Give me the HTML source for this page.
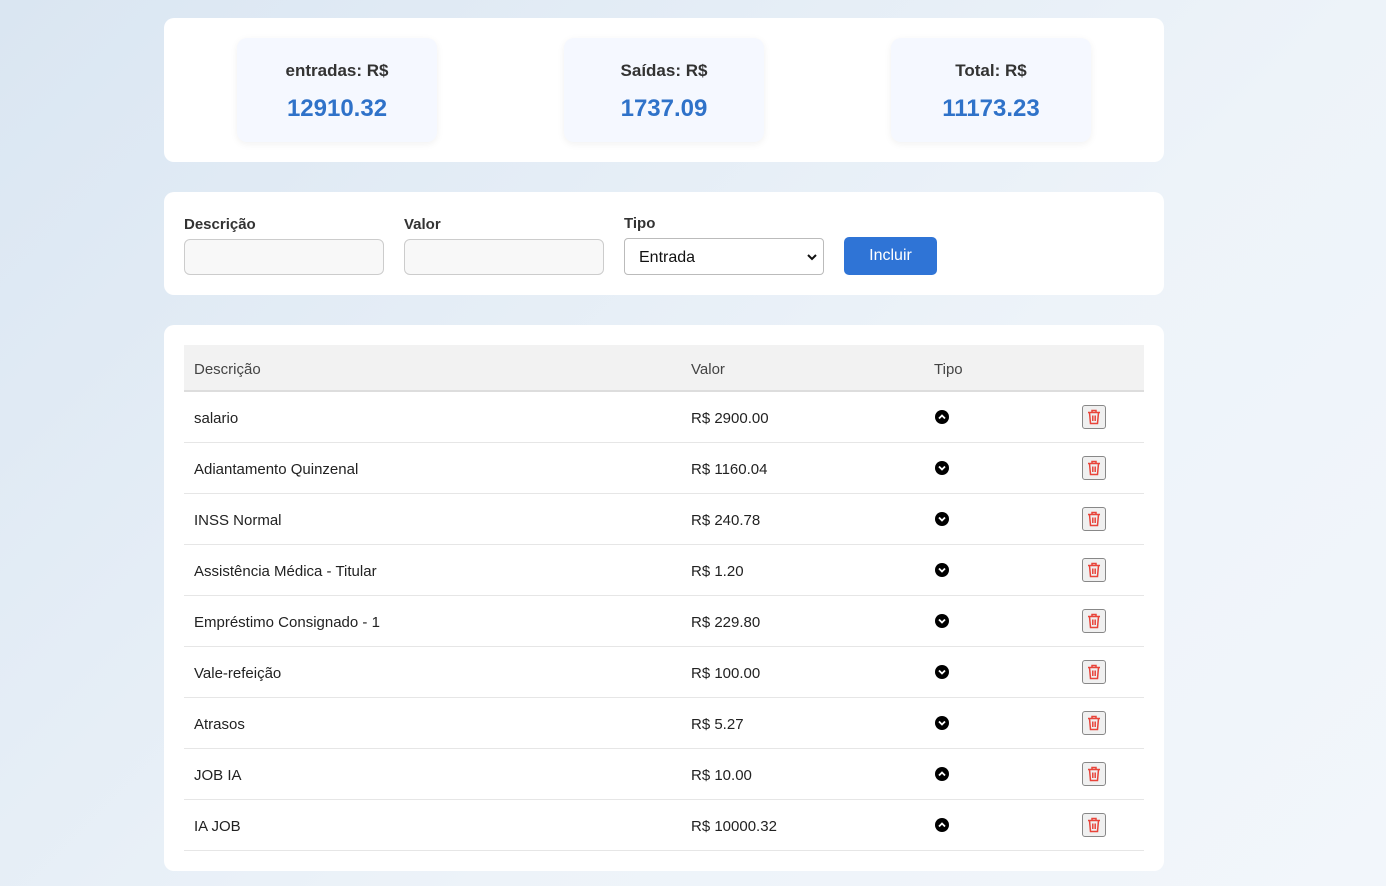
<!DOCTYPE html>
<html><head><meta charset="utf-8"><style>
*{box-sizing:border-box;margin:0;padding:0}
body{width:1386px;height:886px;overflow:hidden;background:linear-gradient(135deg,#dae6f2,#edf3f9 60%,#f2f6fb);font-family:"Liberation Sans",sans-serif;color:#222;position:relative}
.card{position:absolute;left:164px;width:1000px;background:#fff;border-radius:10px}
.sum{position:absolute;top:20px;width:200px;height:104px;background:#f5f8ff;border-radius:10px;box-shadow:0 2px 8px rgba(0,0,0,.06);text-align:center}
.sum .t{margin-top:23px;font-weight:bold;font-size:17px;color:#333}
.sum .v{margin-top:14px;font-weight:bold;font-size:24px;color:#2f72c9}
.lbl{position:absolute;top:24px;font-weight:bold;font-size:15px;color:#333}
.inp{position:absolute;top:47px;width:200px;height:36px;border:1px solid #ccc;border-radius:6px;background:#f8f8f8}
.sel{position:absolute;left:460px;top:46px;width:200px;height:37px;border:1px solid #bbb;border-radius:4px;background:#fff;font-size:16px;padding:10px 14px 0;color:#111}
.btn{position:absolute;left:680px;top:45px;width:93px;height:38px;background:#2f74d6;border-radius:5px;color:#fff;font-size:16px;text-align:center;line-height:38px}
table{position:absolute;left:20px;top:20px;width:960px;border-collapse:collapse;font-size:15px}
th{background:#f2f2f2;height:46px;text-align:left;font-weight:normal;color:#444;border-bottom:2px solid #ddd;padding:4px 0 0 10px}
td{height:51px;border-bottom:1px solid #e6e6e6;padding:4px 0 0 10px;color:#222}
td.x{padding:0 0 0 12px}
.tr{display:inline-block;width:24px;height:24px;border:1px solid #888;border-radius:3px;background:#f0f0f0;vertical-align:middle;padding:3px 0 0 4px}
</style></head><body>
<div class="card" style="top:18px;height:144px">
<div class="sum" style="left:73px"><div class="t">entradas: R$</div><div class="v">12910.32</div></div>
<div class="sum" style="left:400px"><div class="t">Saídas: R$</div><div class="v">1737.09</div></div>
<div class="sum" style="left:727px"><div class="t">Total: R$</div><div class="v">11173.23</div></div>
</div>
<div class="card" style="top:192px;height:103px">
<div class="lbl" style="left:20px">Descrição</div><div class="inp" style="left:20px"></div>
<div class="lbl" style="left:240px">Valor</div><div class="inp" style="left:240px"></div>
<div class="lbl" style="left:460px;top:23px">Tipo</div>
<div class="sel">Entrada<svg style="position:absolute;right:6px;top:15px" width="10" height="7" viewBox="0 0 10 7"><path d="M1 1l4 4 4-4" stroke="#111" stroke-width="2" fill="none"/></svg></div>
<div class="btn">Incluir</div>
</div>
<div class="card" style="top:325px;height:546px">
<table>
<tr><th style="width:497px">Descrição</th><th style="width:243px">Valor</th><th>Tipo</th><th style="width:74px"></th></tr>
<tbody id="b"></tbody>
</table>
</div>
<script>
var rows=[["salario","2900.00",1],["Adiantamento Quinzenal","1160.04",0],["INSS Normal","240.78",0],["Assistência Médica - Titular","1.20",0],["Empréstimo Consignado - 1","229.80",0],["Vale-refeição","100.00",0],["Atrasos","5.27",0],["JOB IA","10.00",1],["IA JOB","10000.32",1]];
var h="";rows.forEach(function(r){var p=r[2]?"M4 8.5l3-3 3 3":"M4 5.5l3 3 3-3";
h+='<tr><td>'+r[0]+'</td><td>R$ '+r[1]+'</td><td><svg style="margin-left:1px" width="14" height="14" viewBox="0 0 14 14"><circle cx="7" cy="7" r="7"/><path d="'+p+'" stroke="#fff" stroke-width="1.8" fill="none"/></svg></td><td class="x"><span class="tr"><svg width="14" height="16" viewBox="0 0 14 16" fill="none" stroke="#e8443a" stroke-width="1.5"><path d="M1 3.5h12M5 3.5V1.5h4v2M2.5 3.5l1 11h7l1-11M5.8 6.5v5.5M8.2 6.5v5.5"/></svg></span></td></tr>';});
document.getElementById("b").innerHTML=h;
</script>
</body></html>
